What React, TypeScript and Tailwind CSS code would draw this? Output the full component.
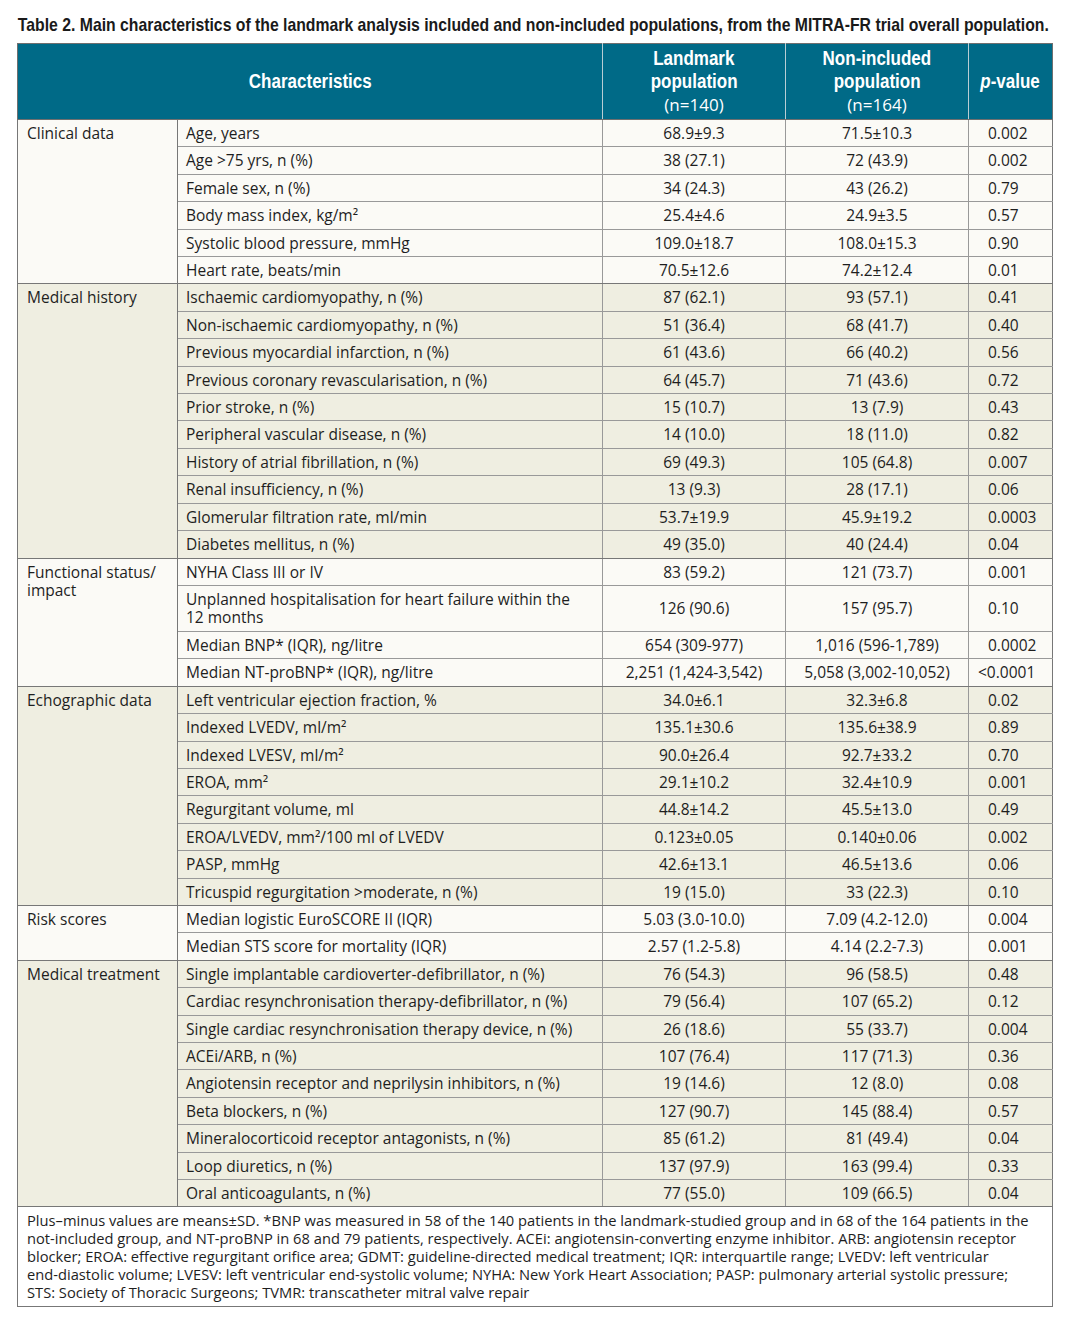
type Row = { label: string; a: string; b: string; p: string };
type Group = { name: string; bg: string; rows: Row[] };

const r = (label: string, a: string, b: string, p: string): Row => ({ label, a, b, p });

const groups: Group[] = [
  {
    name: 'Clinical data',
    bg: 'bg-[#fbfaf6]',
    rows: [
      r('Age, years', '68.9±9.3', '71.5±10.3', '0.002'),
      r('Age >75 yrs, n (%)', '38 (27.1)', '72 (43.9)', '0.002'),
      r('Female sex, n (%)', '34 (24.3)', '43 (26.2)', '0.79'),
      r('Body mass index, kg/m²', '25.4±4.6', '24.9±3.5', '0.57'),
      r('Systolic blood pressure, mmHg', '109.0±18.7', '108.0±15.3', '0.90'),
      r('Heart rate, beats/min', '70.5±12.6', '74.2±12.4', '0.01'),
    ],
  },
  {
    name: 'Medical history',
    bg: 'bg-[#efeee1]',
    rows: [
      r('Ischaemic cardiomyopathy, n (%)', '87 (62.1)', '93 (57.1)', '0.41'),
      r('Non-ischaemic cardiomyopathy, n (%)', '51 (36.4)', '68 (41.7)', '0.40'),
      r('Previous myocardial infarction, n (%)', '61 (43.6)', '66 (40.2)', '0.56'),
      r('Previous coronary revascularisation, n (%)', '64 (45.7)', '71 (43.6)', '0.72'),
      r('Prior stroke, n (%)', '15 (10.7)', '13 (7.9)', '0.43'),
      r('Peripheral vascular disease, n (%)', '14 (10.0)', '18 (11.0)', '0.82'),
      r('History of atrial fibrillation, n (%)', '69 (49.3)', '105 (64.8)', '0.007'),
      r('Renal insufficiency, n (%)', '13 (9.3)', '28 (17.1)', '0.06'),
      r('Glomerular filtration rate, ml/min', '53.7±19.9', '45.9±19.2', '0.0003'),
      r('Diabetes mellitus, n (%)', '49 (35.0)', '40 (24.4)', '0.04'),
    ],
  },
  {
    name: 'Functional status/ impact',
    bg: 'bg-[#fbfaf6]',
    rows: [
      r('NYHA Class III or IV', '83 (59.2)', '121 (73.7)', '0.001'),
      r('Unplanned hospitalisation for heart failure within the\n12 months', '126 (90.6)', '157 (95.7)', '0.10'),
      r('Median BNP* (IQR), ng/litre', '654 (309-977)', '1,016 (596-1,789)', '0.0002'),
      r('Median NT-proBNP* (IQR), ng/litre', '2,251 (1,424-3,542)', '5,058 (3,002-10,052)', '<0.0001'),
    ],
  },
  {
    name: 'Echographic data',
    bg: 'bg-[#efeee1]',
    rows: [
      r('Left ventricular ejection fraction, %', '34.0±6.1', '32.3±6.8', '0.02'),
      r('Indexed LVEDV, ml/m²', '135.1±30.6', '135.6±38.9', '0.89'),
      r('Indexed LVESV, ml/m²', '90.0±26.4', '92.7±33.2', '0.70'),
      r('EROA, mm²', '29.1±10.2', '32.4±10.9', '0.001'),
      r('Regurgitant volume, ml', '44.8±14.2', '45.5±13.0', '0.49'),
      r('EROA/LVEDV, mm²/100 ml of LVEDV', '0.123±0.05', '0.140±0.06', '0.002'),
      r('PASP, mmHg', '42.6±13.1', '46.5±13.6', '0.06'),
      r('Tricuspid regurgitation >moderate, n (%)', '19 (15.0)', '33 (22.3)', '0.10'),
    ],
  },
  {
    name: 'Risk scores',
    bg: 'bg-[#fbfaf6]',
    rows: [
      r('Median logistic EuroSCORE II (IQR)', '5.03 (3.0-10.0)', '7.09 (4.2-12.0)', '0.004'),
      r('Median STS score for mortality (IQR)', '2.57 (1.2-5.8)', '4.14 (2.2-7.3)', '0.001'),
    ],
  },
  {
    name: 'Medical treatment',
    bg: 'bg-[#efeee1]',
    rows: [
      r('Single implantable cardioverter-defibrillator, n (%)', '76 (54.3)', '96 (58.5)', '0.48'),
      r('Cardiac resynchronisation therapy-defibrillator, n (%)', '79 (56.4)', '107 (65.2)', '0.12'),
      r('Single cardiac resynchronisation therapy device, n (%)', '26 (18.6)', '55 (33.7)', '0.004'),
      r('ACEi/ARB, n (%)', '107 (76.4)', '117 (71.3)', '0.36'),
      r('Angiotensin receptor and neprilysin inhibitors, n (%)', '19 (14.6)', '12 (8.0)', '0.08'),
      r('Beta blockers, n (%)', '127 (90.7)', '145 (88.4)', '0.57'),
      r('Mineralocorticoid receptor antagonists, n (%)', '85 (61.2)', '81 (49.4)', '0.04'),
      r('Loop diuretics, n (%)', '137 (97.9)', '163 (99.4)', '0.33'),
      r('Oral anticoagulants, n (%)', '77 (55.0)', '109 (66.5)', '0.04'),
    ],
  },
];

const footnote = [
  'Plus–minus values are means±SD. *BNP was measured in 58 of the 140 patients in the landmark-studied group and in 68 of the 164 patients in the',
  'not-included group, and NT-proBNP in 68 and 79 patients, respectively. ACEi: angiotensin-converting enzyme inhibitor. ARB: angiotensin receptor',
  'blocker; EROA: effective regurgitant orifice area; GDMT: guideline-directed medical treatment; IQR: interquartile range; LVEDV: left ventricular',
  'end-diastolic volume; LVESV: left ventricular end-systolic volume; NYHA: New York Heart Association; PASP: pulmonary arterial systolic pressure;',
  'STS: Society of Thoracic Surgeons; TVMR: transcatheter mitral valve repair',
];

// condensed bold heading text (no narrow face installed, so squeeze Liberation Sans)
function Cond({ children }: { children: React.ReactNode }) {
  return <span className="inline-block scale-x-[0.85] whitespace-nowrap">{children}</span>;
}

export default function App() {
  return (
    <div className="w-[1069px] min-h-[1324px] bg-white pt-[13px] pl-[17px] text-[#1e1e1e] font-['Open_Sans','Liberation_Sans',sans-serif]">
      <div className="w-[1040px] h-[22px] overflow-hidden">
        <h1 className="font-['Liberation_Sans',Arial,sans-serif] font-bold text-[19px] leading-[22px] text-[#1a1a1a] whitespace-nowrap inline-block origin-left scale-x-[0.83] pl-[1px]">
          Table 2. Main characteristics of the landmark analysis included and non-included populations, from the MITRA-FR trial overall population.
        </h1>
      </div>

      <table className="mt-[8px] w-[1035px] table-fixed border-collapse text-[15.5px]">
        <colgroup>
          <col className="w-[160px]" />
          <col className="w-[425px]" />
          <col className="w-[183px]" />
          <col className="w-[183px]" />
          <col className="w-[84px]" />
        </colgroup>
        <thead>
          <tr className="h-[76px] bg-[#006a87] text-white font-['Liberation_Sans',Arial,sans-serif] font-bold text-[20px] leading-[23px]">
            <th colSpan={2} className="border border-[#6f6f6f] border-r-[#b9cdd4] font-bold"><Cond>Characteristics</Cond></th>
            <th className="border border-[#6f6f6f] border-x-[#b9cdd4] font-bold">
              <Cond>Landmark</Cond><br /><Cond>population</Cond><br />
              <span className="font-['Open_Sans',sans-serif] font-normal text-[17px]">(n=140)</span>
            </th>
            <th className="border border-[#6f6f6f] border-x-[#b9cdd4] font-bold">
              <Cond>Non-included</Cond><br /><Cond>population</Cond><br />
              <span className="font-['Open_Sans',sans-serif] font-normal text-[17px]">(n=164)</span>
            </th>
            <th className="border border-[#6f6f6f] border-l-[#b9cdd4] font-bold"><Cond><i>p</i>-value</Cond></th>
          </tr>
        </thead>
        <tbody>
          {groups.map(g =>
            g.rows.map((row, i) => {
              const edge = `${i === 0 ? 'border-t-[#777]' : ''} ${i === g.rows.length - 1 ? 'border-b-[#777]' : ''}`;
              const twoLine = row.label.includes('\n');
              return (
                <tr key={g.name + i} className={`${g.bg} ${twoLine ? 'leading-[18.5px]' : 'leading-[18.4px]'}`}>
                  {i === 0 && (
                    <td rowSpan={g.rows.length} className="align-top border border-[#777] pl-[9px] pr-[12px] pt-[4px] leading-[18.5px]">
                      {g.name}
                    </td>
                  )}
                  <td className={`border border-[#999] border-l-[#777] px-[8px] py-[4px] whitespace-pre-line ${edge}`}>
                    {row.label}
                  </td>
                  <td className={`border border-[#999] text-center py-[4px] whitespace-nowrap ${edge}`}>{row.a}</td>
                  <td className={`border border-[#999] text-center py-[4px] whitespace-nowrap ${edge}`}>{row.b}</td>
                  <td className={`border border-[#999] border-r-[#777] py-[4px] whitespace-nowrap ${row.p.startsWith('<') ? 'pl-[9px]' : 'pl-[19px]'} ${edge}`}>
                    {row.p}
                  </td>
                </tr>
              );
            })
          )}
          <tr className="bg-white">
            <td colSpan={5} className="border border-[#777] px-[9px] pt-[5px] pb-[5px] text-[14.7px] leading-[17.8px]">
              {footnote.map(line => (
                <div key={line} className="whitespace-nowrap">{line}</div>
              ))}
            </td>
          </tr>
        </tbody>
      </table>
    </div>
  );
}
